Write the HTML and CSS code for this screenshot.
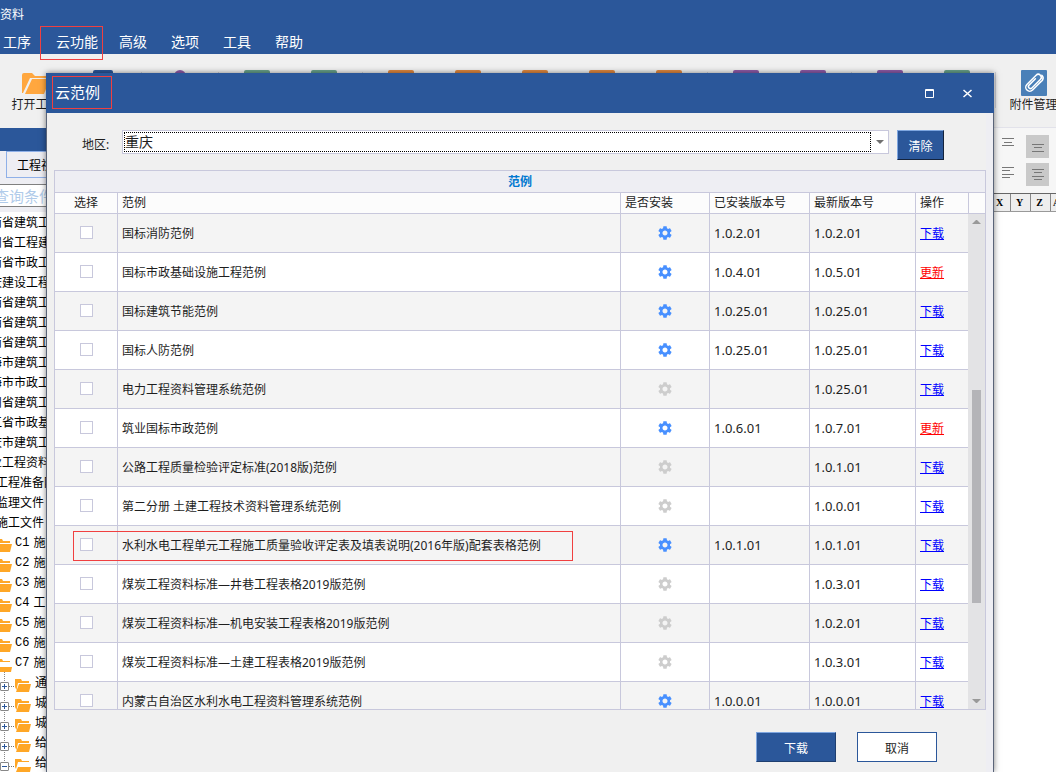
FILE: index.html
```html
<!DOCTYPE html>
<html lang="zh-CN">

<head>
    <meta charset="UTF-8">
    <title>云范例</title>
    <link rel="stylesheet" href="styles.css">
</head>

<body>
    <svg class="symbols" width="0" height="0">
        <symbol id="gear" viewBox="2 2 20 20">
            <path fill="currentColor" d="M19.14 12.94c.04-.3.06-.61.06-.94 0-.32-.02-.64-.07-.94l2.03-1.58c.18-.14.23-.41.12-.61l-1.92-3.32c-.12-.22-.37-.29-.59-.22l-2.39.96c-.5-.38-1.03-.7-1.62-.94l-.36-2.54c-.04-.24-.24-.41-.48-.41h-3.84c-.24 0-.43.17-.47.41l-.36 2.54c-.59.24-1.13.57-1.62.94l-2.39-.96c-.22-.08-.47 0-.59.22L2.74 8.87c-.12.21-.08.47.12.61l2.03 1.58c-.05.3-.09.63-.09.94s.02.64.07.94l-2.03 1.58c-.18.14-.23.41-.12.61l1.92 3.32c.12.22.37.29.59.22l2.39-.96c.5.38 1.03.7 1.62.94l.36 2.54c.05.24.24.41.48.41h3.84c.24 0 .44-.17.47-.41l.36-2.54c.59-.24 1.13-.56 1.62-.94l2.39.96c.22.08.47 0 .59-.22l1.92-3.32c.12-.22.07-.47-.12-.61l-2.01-1.58zM12 15.6c-1.98 0-3.6-1.62-3.6-3.6s1.62-3.6 3.6-3.6 3.6 1.62 3.6 3.6-1.62 3.6-3.6 3.6z"/>
        </symbol>
        <symbol id="folder" viewBox="0 0 16 13">
            <path fill="#ffa726" d="M0 0h6l1 2h7v2H3L1.500 11 0 8z"/>
            <path fill="#ffa726" d="M4 5h12l-2 8H1z"/>
        </symbol>
        <symbol id="folderOpen" viewBox="0 0 16 13">
            <path fill="#ffa726" d="M0 0h6l1 2h7v1H3L1 10 0 8z"/>
            <path fill="#ffa726" d="M3 8h13l-1 5H1z"/>
        </symbol>
    </svg>

    <div class="app">
        <header class="top">
            <div class="appTitle">资料</div>
            <nav class="menu">
                <a href="#">工序</a>
                <a href="#" class="marked">云功能</a>
                <a href="#">高级</a>
                <a href="#">选项</a>
                <a href="#">工具</a>
                <a href="#">帮助</a>
            </nav>
        </header>

        <div class="ribbon">
            <div class="group">
                <div class="tool">
                    <svg width="28" height="26" viewBox="0 0 28 26">
                        <path fill="#ffa73f" d="M0 5q0-2 2-2h8l3 3h11v2H8L1 23H0z"/>
                        <path fill="#ffa73f" d="M10 9h18l-6 15H3z"/>
                    </svg>
                    <span>打开工程</span>
                </div>
                <div class="tool"><i class="icon blue"></i></div>
            </div>
            <div class="group">
                <div class="tool"><i class="icon ring"></i></div>
            </div>
            <div class="group">
                <div class="tool"><i class="icon green"></i></div>
                <div class="tool"><i class="icon green"></i></div>
            </div>
            <div class="group">
                <div class="tool"><i class="icon orange"></i></div>
                <div class="tool"><i class="icon orange"></i></div>
                <div class="tool"><i class="icon orange"></i></div>
                <div class="tool"><i class="icon orange"></i></div>
                <div class="tool"><i class="icon orange"></i></div>
            </div>
            <div class="group">
                <div class="tool"><i class="icon purple"></i></div>
                <div class="tool"><i class="icon purple"></i></div>
            </div>
            <div class="group">
                <div class="tool"><i class="icon purple"></i></div>
                <div class="tool"><i class="icon green"></i></div>
            </div>
            <div class="group">
                <div class="tool">
                    <svg width="26" height="26" viewBox="0 0 26 26">
                        <rect width="26" height="26" rx="1" fill="#4a80b8"/>
                        <g transform="rotate(45 13 13)" fill="none" stroke="#fff" stroke-width="1.500" stroke-linecap="round">
                            <path d="M17 8v11a4 4 0 0 1-8 0V6a3 3 0 0 1 6 0v12a2 2 0 0 1-4 0V9"/>
                            <path d="M17 8V5a4 4 0 0 0-4-3"/>
                        </g>
                    </svg>
                    <span>附件管理</span>
                </div>
            </div>
        </div>

        <div class="work">
            <aside class="side">
                <div class="sideTitle"></div>
                <div class="tabs"><button type="button">工程视图</button></div>
                <div class="search"><input type="text" aria-label="查询条件" placeholder="查询条件"></div>
                <ul class="tree">
                    <li class="cut">南省建筑工</li>
                    <li class="cut">州省工程建</li>
                    <li class="cut">南省市政工</li>
                    <li class="cut">庆建设工程</li>
                    <li class="cut">西省建筑工</li>
                    <li class="cut">西省建筑工</li>
                    <li class="cut">南省建筑工</li>
                    <li class="cut">海市建筑工</li>
                    <li class="cut">海市市政工</li>
                    <li class="cut">州省建筑工</li>
                    <li class="cut">江省市政基</li>
                    <li class="cut">庆市建筑工</li>
                    <li class="cut">业工程资料</li>
                    <li class="part">工程准备阶</li>
                    <li class="part">监理文件</li>
                    <li class="part">施工文件</li>
                    <li class="part"><svg><use href="#folder"/></svg><span>C1</span>施</li>
                    <li class="part"><svg><use href="#folder"/></svg><span>C2</span>施</li>
                    <li class="part"><svg><use href="#folder"/></svg><span>C3</span>施</li>
                    <li class="part"><svg><use href="#folder"/></svg><span>C4</span>工</li>
                    <li class="part"><svg><use href="#folder"/></svg><span>C5</span>施</li>
                    <li class="part"><svg><use href="#folder"/></svg><span>C6</span>施</li>
                    <li class="part"><svg><use href="#folderOpen"/></svg><span>C7</span>施</li>
                    <li class="leaf"><i class="toggle plus"></i><svg><use href="#folder"/></svg>通</li>
                    <li class="leaf"><i class="toggle plus"></i><svg><use href="#folder"/></svg>城</li>
                    <li class="leaf"><i class="toggle plus"></i><svg><use href="#folder"/></svg>城</li>
                    <li class="leaf"><i class="toggle plus"></i><svg><use href="#folder"/></svg>给</li>
                    <li class="leaf"><i class="toggle"></i><svg><use href="#folderOpen"/></svg>给</li>
                </ul>
            </aside>
            <main class="sheet">
                <div class="align">
                    <button type="button" aria-label="顶端对齐"><svg width="12" height="12" stroke="#777"><path d="M0 .5h12M2 4.500h8M0 7.500h12"/></svg></button>
                    <button type="button" class="on" aria-label="垂直居中"><svg width="12" height="12" stroke="#777"><path d="M0 4.500h12M2 7.500h8M0 11.500h12"/></svg></button>
                    <button type="button" aria-label="左对齐"><svg width="12" height="12" stroke="#777"><path d="M0 1.500h12M0 4.500h8M0 8.500h12M0 11.500h8"/></svg></button>
                    <button type="button" class="on" aria-label="居中"><svg width="12" height="12" stroke="#777"><path d="M0 1.500h12M2 4.500h8M0 8.500h12M2 11.500h8"/></svg></button>
                </div>
                <div class="letters"><b>X</b><b>Y</b><b>Z</b><b class="last">A</b></div>
            </main>
        </div>
    </div>

    <div class="dialog" role="dialog" aria-labelledby="dialogTitle">
        <div class="dialogTop">
            <h1 id="dialogTitle">云范例</h1>
            <button type="button" aria-label="最大化"><svg width="9" height="9"><path fill="none" stroke="#fff" d="M.5.5h8v8h-8zM0 1.500h9"/></svg></button>
            <button type="button" aria-label="关闭"><svg width="9" height="9"><path stroke="#fff" stroke-width="1.500" d="M.5 1l8 7M8.500 1l-8 7"/></svg></button>
        </div>
        <div class="dialogBody">
            <div class="filter">
                <label for="area">地区:</label>
                <div class="combo">
                    <select id="area">
                        <option>重庆</option>
                    </select>
                </div>
                <button type="button" class="primary clear">清除</button>
            </div>

            <div class="grid">
                <table>
                    <caption>范例</caption>
                    <colgroup>
                        <col class="colCheck">
                        <col>
                        <col class="colState">
                        <col class="colOld">
                        <col class="colNew">
                        <col class="colLink">
                        <col class="colBar">
                    </colgroup>
                    <thead>
                        <tr><th class="center">选择</th><th>范例</th><th>是否安装</th><th>已安装版本号</th><th>最新版本号</th><th>操作</th><th></th></tr>
                    </thead>
                    <tbody>
                        <tr>
                            <td class="center"><input type="checkbox" aria-label="国标消防范例"></td>
                            <td>国标消防范例</td>
                            <td class="center"><svg class="gear"><use href="#gear"/></svg></td>
                            <td class="ver">1.0.2.01</td>
                            <td class="ver">1.0.2.01</td>
                            <td><a href="#">下载</a></td>
                            <td></td>
                        </tr>
                        <tr>
                            <td class="center"><input type="checkbox" aria-label="国标市政基础设施工程范例"></td>
                            <td>国标市政基础设施工程范例</td>
                            <td class="center"><svg class="gear"><use href="#gear"/></svg></td>
                            <td class="ver">1.0.4.01</td>
                            <td class="ver">1.0.5.01</td>
                            <td><a href="#" class="update">更新</a></td>
                            <td></td>
                        </tr>
                        <tr>
                            <td class="center"><input type="checkbox" aria-label="国标建筑节能范例"></td>
                            <td>国标建筑节能范例</td>
                            <td class="center"><svg class="gear"><use href="#gear"/></svg></td>
                            <td class="ver">1.0.25.01</td>
                            <td class="ver">1.0.25.01</td>
                            <td><a href="#">下载</a></td>
                            <td></td>
                        </tr>
                        <tr>
                            <td class="center"><input type="checkbox" aria-label="国标人防范例"></td>
                            <td>国标人防范例</td>
                            <td class="center"><svg class="gear"><use href="#gear"/></svg></td>
                            <td class="ver">1.0.25.01</td>
                            <td class="ver">1.0.25.01</td>
                            <td><a href="#">下载</a></td>
                            <td></td>
                        </tr>
                        <tr>
                            <td class="center"><input type="checkbox" aria-label="电力工程资料管理系统范例"></td>
                            <td>电力工程资料管理系统范例</td>
                            <td class="center"><svg class="gear off"><use href="#gear"/></svg></td>
                            <td class="ver"></td>
                            <td class="ver">1.0.25.01</td>
                            <td><a href="#">下载</a></td>
                            <td></td>
                        </tr>
                        <tr>
                            <td class="center"><input type="checkbox" aria-label="筑业国标市政范例"></td>
                            <td>筑业国标市政范例</td>
                            <td class="center"><svg class="gear"><use href="#gear"/></svg></td>
                            <td class="ver">1.0.6.01</td>
                            <td class="ver">1.0.7.01</td>
                            <td><a href="#" class="update">更新</a></td>
                            <td></td>
                        </tr>
                        <tr>
                            <td class="center"><input type="checkbox" aria-label="公路工程质量检验评定标准(2018版)范例"></td>
                            <td>公路工程质量检验评定标准(2018版)范例</td>
                            <td class="center"><svg class="gear off"><use href="#gear"/></svg></td>
                            <td class="ver"></td>
                            <td class="ver">1.0.1.01</td>
                            <td><a href="#">下载</a></td>
                            <td></td>
                        </tr>
                        <tr>
                            <td class="center"><input type="checkbox" aria-label="第二分册 土建工程技术资料管理系统范例"></td>
                            <td>第二分册 土建工程技术资料管理系统范例</td>
                            <td class="center"><svg class="gear off"><use href="#gear"/></svg></td>
                            <td class="ver"></td>
                            <td class="ver">1.0.0.01</td>
                            <td><a href="#">下载</a></td>
                            <td></td>
                        </tr>
                        <tr>
                            <td class="center outlined"><input type="checkbox" aria-label="水利水电工程单元工程施工质量验收评定表及填表说明(2016年版)配套表格范例"></td>
                            <td>水利水电工程单元工程施工质量验收评定表及填表说明(2016年版)配套表格范例</td>
                            <td class="center"><svg class="gear"><use href="#gear"/></svg></td>
                            <td class="ver">1.0.1.01</td>
                            <td class="ver">1.0.1.01</td>
                            <td><a href="#">下载</a></td>
                            <td></td>
                        </tr>
                        <tr>
                            <td class="center"><input type="checkbox" aria-label="煤炭工程资料标准—井巷工程表格2019版范例"></td>
                            <td>煤炭工程资料标准—井巷工程表格2019版范例</td>
                            <td class="center"><svg class="gear off"><use href="#gear"/></svg></td>
                            <td class="ver"></td>
                            <td class="ver">1.0.3.01</td>
                            <td><a href="#">下载</a></td>
                            <td></td>
                        </tr>
                        <tr>
                            <td class="center"><input type="checkbox" aria-label="煤炭工程资料标准—机电安装工程表格2019版范例"></td>
                            <td>煤炭工程资料标准—机电安装工程表格2019版范例</td>
                            <td class="center"><svg class="gear off"><use href="#gear"/></svg></td>
                            <td class="ver"></td>
                            <td class="ver">1.0.2.01</td>
                            <td><a href="#">下载</a></td>
                            <td></td>
                        </tr>
                        <tr>
                            <td class="center"><input type="checkbox" aria-label="煤炭工程资料标准—土建工程表格2019版范例"></td>
                            <td>煤炭工程资料标准—土建工程表格2019版范例</td>
                            <td class="center"><svg class="gear off"><use href="#gear"/></svg></td>
                            <td class="ver"></td>
                            <td class="ver">1.0.3.01</td>
                            <td><a href="#">下载</a></td>
                            <td></td>
                        </tr>
                        <tr>
                            <td class="center"><input type="checkbox" aria-label="内蒙古自治区水利水电工程资料管理系统范例"></td>
                            <td>内蒙古自治区水利水电工程资料管理系统范例</td>
                            <td class="center"><svg class="gear"><use href="#gear"/></svg></td>
                            <td class="ver">1.0.0.01</td>
                            <td class="ver">1.0.0.01</td>
                            <td><a href="#">下载</a></td>
                            <td></td>
                        </tr>
                    </tbody>
                </table>
                <div class="scrollbar">
                    <i class="arrow up"></i>
                    <div class="track"><div class="thumb"></div></div>
                    <i class="arrow down"></i>
                </div>
            </div>

            <div class="actions">
                <button type="button" class="primary">下载</button>
                <button type="button" class="plain">取消</button>
            </div>
        </div>
    </div>
</body>

</html>
```

FILE: styles.css
```css
*,
*::after {
    box-sizing: border-box;
}

html,
body {
    height: 100%;
}

body {
    margin: 0;
    overflow: hidden;
    position: relative;
    background-color: #fff;
    color: #1e1e1e;
    font-family: "Noto Sans", "Noto Sans CJK SC", sans-serif;
    font-size: 12px;
    line-height: 18px;
}

button,
input,
select {
    font-family: inherit;
    font-size: 12px;
    color: inherit;
    margin: 0;
    padding: 0;
    border: none;
    border-radius: 0;
    background: none;
}

svg {
    display: block;
    flex: none;
}

.symbols {
    position: absolute;
}

.app {
    display: flex;
    flex-direction: column;
    height: 100%;
    overflow: hidden;
}

/* top bar and menu */
.top {
    flex: none;
    height: 54px;
    padding-top: 6px;
    background-color: #2b579a;
    color: #fff;
}

.menu {
    display: flex;
    align-items: flex-start;
    gap: 24px;
    padding-left: 3px;
    margin-top: 2px;
    font-size: 14px;
    line-height: 32px;
}

.menu a {
    color: #fff;
    text-decoration: none;
}

.menu .marked {
    position: relative;
    z-index: 1;
    height: 34px;
    margin: 0 -8px 0 -15px;
    padding: 0 4px 0 15px;
    line-height: 30px;
    border: 1px solid #f04040;
}

/* ribbon */
.ribbon {
    display: flex;
    flex: none;
    gap: 10px;
    height: 73px;
    padding: 16px 0 0 2px;
    overflow: hidden;
    background-color: #f0f0f0;
}

.group {
    display: flex;
    flex: none;
    position: relative;
}

.group::after {
    content: "";
    position: absolute;
    top: 2px;
    right: -6px;
    width: 1px;
    height: 36px;
    background-color: #d0d0d8;
}

.group:last-child::after {
    display: none;
}

.tool {
    display: flex;
    flex-direction: column;
    align-items: center;
    width: 67px;
    white-space: nowrap;
}

.icon {
    width: 26px;
    height: 26px;
    border-radius: 2px;
}

.blue {
    width: 20px;
    background-color: #2b579a;
}

.green {
    background-color: #67a08a;
}

.orange {
    background-color: #e08840;
}

.purple {
    background-color: #8e5ba8;
}

.ring {
    width: 12px;
    border: 3px solid #8e5ba8;
    border-radius: 6px;
}

/* work area behind the dialog */
.work {
    display: flex;
    flex: 1;
    min-height: 0;
}

.side {
    flex: none;
    width: 25%;
    overflow: hidden;
    background-color: #eeeef3;
    color: #000;
}

.sideTitle {
    height: 24px;
    border-top: 1px solid #f0f0f0;
    background-color: #2b579a;
}

.tabs {
    padding-left: 6px;
    border-bottom: 6px solid #eeeef3;
}

.tabs button {
    display: block;
    height: 27px;
    padding: 0 10px;
    border: 1px solid #8fb0e8;
}

.search {
    height: 28px;
    padding-bottom: 5px;
}

.search input {
    display: block;
    width: 100%;
    height: 23px;
    text-indent: -6px;
    font-size: 15px;
    border: solid #808080;
    border-width: 1px 0;
    background-color: #fff;
}

.search input::placeholder {
    color: #b0cbea;
}

.tree {
    margin: 0;
    padding: 0;
    list-style: none;
    background-color: #fff;
}

.tree li {
    display: flex;
    height: 20px;
    line-height: 22px;
    white-space: nowrap;
}

.tree svg {
    width: 16px;
    height: 13px;
    margin-top: 7px;
}

.tree span {
    margin: 0 4px 0 3px;
    font-family: "Liberation Mono", monospace;
}

.cut {
    margin-left: -10px;
}

.part {
    margin-left: -4px;
}

.leaf {
    background: repeating-linear-gradient(#888 0 1px, #fff 1px 2px) 4px 0 / 1px 100% no-repeat;
}

.leaf svg {
    margin-right: 4px;
}

.toggle {
    position: relative;
    width: 9px;
    height: 9px;
    margin: 10px 6px 0 0;
    border: 1px solid #888;
    border-radius: 1px;
    background: linear-gradient(#2b579a, #2b579a) center / 5px 1px no-repeat #fff;
}

.toggle.plus {
    background: linear-gradient(#2b579a, #2b579a) center / 5px 1px no-repeat, linear-gradient(#2b579a, #2b579a) center / 1px 5px no-repeat #fff;
}

.toggle::after {
    content: "";
    position: absolute;
    left: 8px;
    top: 3px;
    width: 5px;
    border-top: 1px dotted #777;
}

.sheet {
    flex: 1;
    min-width: 0;
    background-color: #fff;
}

.align {
    display: grid;
    grid-template-columns: 24px 23px;
    justify-content: end;
    align-content: start;
    gap: 5px 6px;
    height: 66px;
    padding: 7px 7px 0 0;
    background-color: #f6f6f6;
    border-top: 1px solid #e2e2ea;
}

.align button {
    display: flex;
    align-items: flex-start;
    justify-content: center;
    height: 23px;
    padding-top: 3px;
}

.align .on {
    padding-top: 5px;
    background-color: #c9c9c9;
}

.letters {
    display: flex;
    justify-content: flex-end;
    height: 19px;
    border-top: 1px solid #666;
    border-bottom: 1px solid #999;
    background-color: #eee;
    font-family: "Liberation Serif", serif;
    font-size: 10px;
    color: #000;
}

.letters b {
    width: 20px;
    padding-right: 2px;
    border-right: 1px solid #888;
    text-align: center;
}

.letters .last {
    width: 5px;
    padding-left: 2px;
    overflow: hidden;
    border: none;
    text-align: left;
}

/* dialog */
.dialog {
    position: absolute;
    top: 73px;
    right: 62px;
    bottom: 0;
    left: 46px;
    display: flex;
    flex-direction: column;
    box-shadow: 0 0 6px rgba(0, 0, 0, 0.5);
    background-color: #2b579a;
}

.dialogTop {
    display: flex;
    flex: none;
    align-items: center;
    gap: 17px;
    height: 40px;
    padding: 0 16px 0 6px;
    color: #fff;
}

.dialogTop h1 {
    width: 60px;
    height: 33px;
    margin: 0 auto 2px 0;
    padding-left: 2px;
    border: 1px solid #f04040;
    font-size: 15px;
    font-weight: normal;
    line-height: 31px;
}

.dialogTop button {
    display: flex;
    align-items: center;
    justify-content: center;
    width: 21px;
    height: 21px;
}

.dialogBody {
    display: flex;
    flex: 1;
    flex-direction: column;
    min-height: 0;
    padding: 0 7px;
    border: solid #5a6478;
    border-width: 0 1px;
    background: linear-gradient(#eeeef3, #eeeef3) right / 7px 100% no-repeat #f0f0f0;
}

.filter {
    display: flex;
    flex: none;
    align-items: flex-start;
    height: 57px;
    padding: 17px 42px 0 28px;
}

.filter label {
    width: 40px;
    line-height: 30px;
}

.combo {
    flex: 1;
    position: relative;
    height: 24px;
    margin-right: 8px;
    padding: 1px;
    border: 1px solid #c8c8dc;
    background-color: #fff;
}

.combo::after {
    content: "";
    position: absolute;
    top: 9px;
    right: 4px;
    width: 8px;
    height: 4px;
    border: solid transparent;
    border-width: 4px 4px 0;
    border-top-color: #707070;
}

.combo select {
    display: block;
    width: calc(100% - 16px);
    height: 20px;
    appearance: none;
    border: 1px dotted #000;
    font-size: 14px;
    line-height: 18px;
}

.primary {
    width: 80px;
    height: 30px;
    border: 1px solid #1f3f70;
    border-top-color: #7ea6e0;
    border-left-color: #7ea6e0;
    background-color: #2b579a;
    color: #fff;
}

.clear {
    width: 47px;
    border-color: #7ea6e0 #14233c #14233c #7ea6e0;
}

.plain {
    width: 80px;
    height: 30px;
    border: 1px solid #2b579a;
    background-color: #fff;
}

.primary,
.plain {
    padding-top: 2px;
}

.grid {
    flex: 1;
    position: relative;
    min-height: 0;
    overflow: hidden;
    border: 1px solid #c8c8dc;
}

table {
    width: 100%;
    table-layout: fixed;
    border-spacing: 0;
}

caption {
    height: 22px;
    line-height: 22px;
    font-weight: bold;
    color: #0078d0;
    background-color: #eeeef3;
    border-bottom: 1px solid #c8c8dc;
}

.colCheck {
    width: 63px;
}

.colState {
    width: 89px;
}

.colOld {
    width: 100px;
}

.colNew {
    width: 106px;
}

.colLink {
    width: 53px;
}

.colBar {
    width: 16px;
}

th,
td {
    padding: 0 0 0 4px;
    border: solid #c8c8dc;
    border-width: 0 1px 1px 0;
    text-align: left;
    font-weight: normal;
    white-space: nowrap;
}

th {
    height: 21px;
    background-color: #fcfcfc;
}

th:last-child {
    border-right: none;
}

td {
    height: 39px;
    padding-top: 2px;
}

tbody tr {
    background-color: #fff;
}

tbody tr:nth-child(odd) {
    background-color: #f4f4f4;
}

.center {
    padding: 0;
    text-align: center;
}

.ver {
    padding-top: 0;
    font-size: 13px;
}

td input {
    display: block;
    width: 13px;
    height: 13px;
    margin: 0 auto 2px;
    appearance: none;
    border: 1px solid #c8c8dc;
    background-color: #fff;
}

td a {
    color: #00f;
    text-decoration: underline;
}

td .update {
    color: #f00;
}

.gear {
    width: 14px;
    height: 14px;
    margin: 0 auto;
    color: #4890ff;
}

.gear.off {
    color: #cdcdcd;
}

/* red frame around the highlighted template */
.outlined {
    position: relative;
}

.outlined::after {
    content: "";
    position: absolute;
    top: 5px;
    left: 18px;
    width: 500px;
    height: 30px;
    border: 1px solid #f04040;
    pointer-events: none;
}

.scrollbar {
    position: absolute;
    top: 43px;
    right: 0;
    bottom: 0;
    display: flex;
    flex-direction: column;
    width: 17px;
    background-color: #e3e3e5;
}

.track {
    flex: 1;
    display: flex;
    flex-direction: column;
    justify-content: flex-end;
    padding: 0 4px 90px;
}

.thumb {
    height: 57%;
    background-color: #b4b4b8;
}

.arrow {
    width: 9px;
    height: 4px;
    margin: 6px 4px;
    border: solid transparent;
    border-width: 0 4px 4px;
    border-bottom-color: #999;
}

.arrow.down {
    border-width: 4px 4px 0;
    border-top-color: #999;
}

.actions {
    display: flex;
    flex: none;
    justify-content: flex-end;
    gap: 21px;
    height: 62px;
    padding: 22px 49px 0 0;
}
```
